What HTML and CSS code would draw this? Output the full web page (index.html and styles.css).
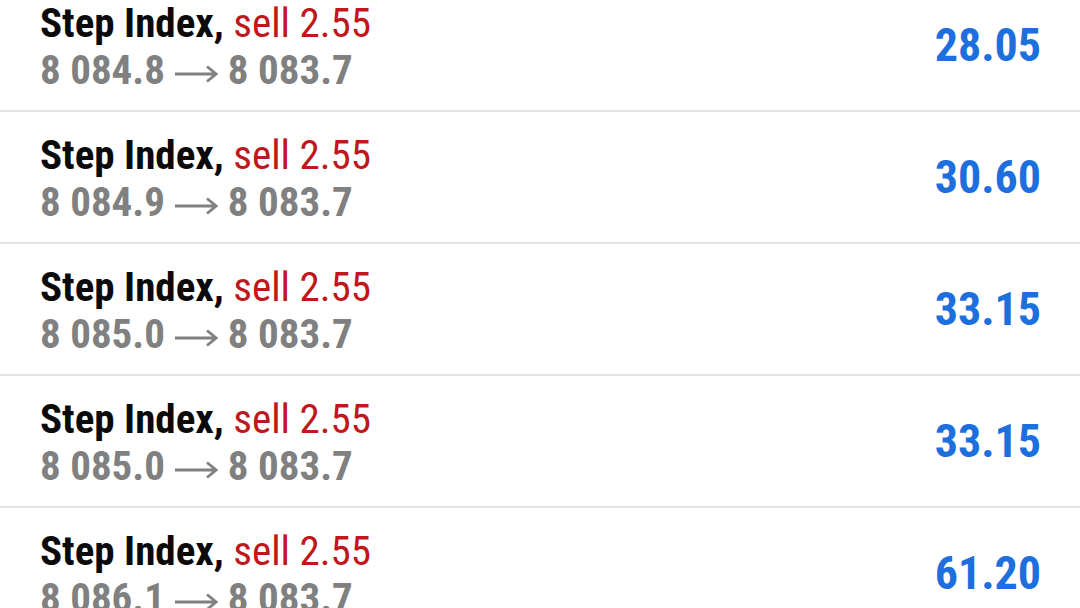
FILE: index.html
```html
<!DOCTYPE html>
<html>
<head lang="en">
    <meta charset="UTF-8">
    <title>History</title>
    <link rel="stylesheet" href="styles.css">
</head>
<body>

<ul class="deals">
    <li class="deal">
        <div class="info">
            <p class="title">Step Index, <span class="type">sell 2.55</span></p>
            <p class="prices">8 084.8 <svg class="arrow" viewBox="0 0 44 20"><path d="M1 10H42M33 2.5L42 10L33 17.5"/></svg> 8 083.7</p>
        </div>
        <span class="profit">28.05</span>
    </li>
    <li class="deal">
        <div class="info">
            <p class="title">Step Index, <span class="type">sell 2.55</span></p>
            <p class="prices">8 084.9 <svg class="arrow" viewBox="0 0 44 20"><path d="M1 10H42M33 2.5L42 10L33 17.5"/></svg> 8 083.7</p>
        </div>
        <span class="profit">30.60</span>
    </li>
    <li class="deal">
        <div class="info">
            <p class="title">Step Index, <span class="type">sell 2.55</span></p>
            <p class="prices">8 085.0 <svg class="arrow" viewBox="0 0 44 20"><path d="M1 10H42M33 2.5L42 10L33 17.5"/></svg> 8 083.7</p>
        </div>
        <span class="profit">33.15</span>
    </li>
    <li class="deal">
        <div class="info">
            <p class="title">Step Index, <span class="type">sell 2.55</span></p>
            <p class="prices">8 085.0 <svg class="arrow" viewBox="0 0 44 20"><path d="M1 10H42M33 2.5L42 10L33 17.5"/></svg> 8 083.7</p>
        </div>
        <span class="profit">33.15</span>
    </li>
    <li class="deal">
        <div class="info">
            <p class="title">Step Index, <span class="type">sell 2.55</span></p>
            <p class="prices">8 086.1 <svg class="arrow" viewBox="0 0 44 20"><path d="M1 10H42M33 2.5L42 10L33 17.5"/></svg> 8 083.7</p>
        </div>
        <span class="profit">61.20</span>
    </li>
</ul>

</body>
</html>
```

FILE: styles.css
```css
* {
    padding: 0;
    margin: 0;
    list-style: none;
}
html, body {
    height: 100%;
    overflow: hidden;
    background: #fff;
}
body {
    font-family: Roboto, "Liberation Sans", sans-serif;
    font-stretch: 75%;
}
.deals {
    margin-top: -20px;
}
.deal {
    display: flex;
    align-items: center;
    justify-content: space-between;
    height: 130px;
    padding: 0 39px 0 40px;
    border-bottom: 2px solid #e3e3e3;
}
.info {
    padding-top: 4px;
}
.title, .prices {
    font-size: 41px;
    line-height: 47px;
    font-weight: 700;
    white-space: nowrap;
}
.title {
    color: #0a0a0a;
}
.type {
    color: #c0161c;
    font-weight: 400;
}
.prices {
    color: #808080;
}
.arrow {
    width: 44px;
    height: 20px;
    fill: none;
    stroke: #808080;
    stroke-width: 2.8;
}
.profit {
    font-size: 46px;
    font-weight: 700;
    color: #1c6fdd;
}
```
